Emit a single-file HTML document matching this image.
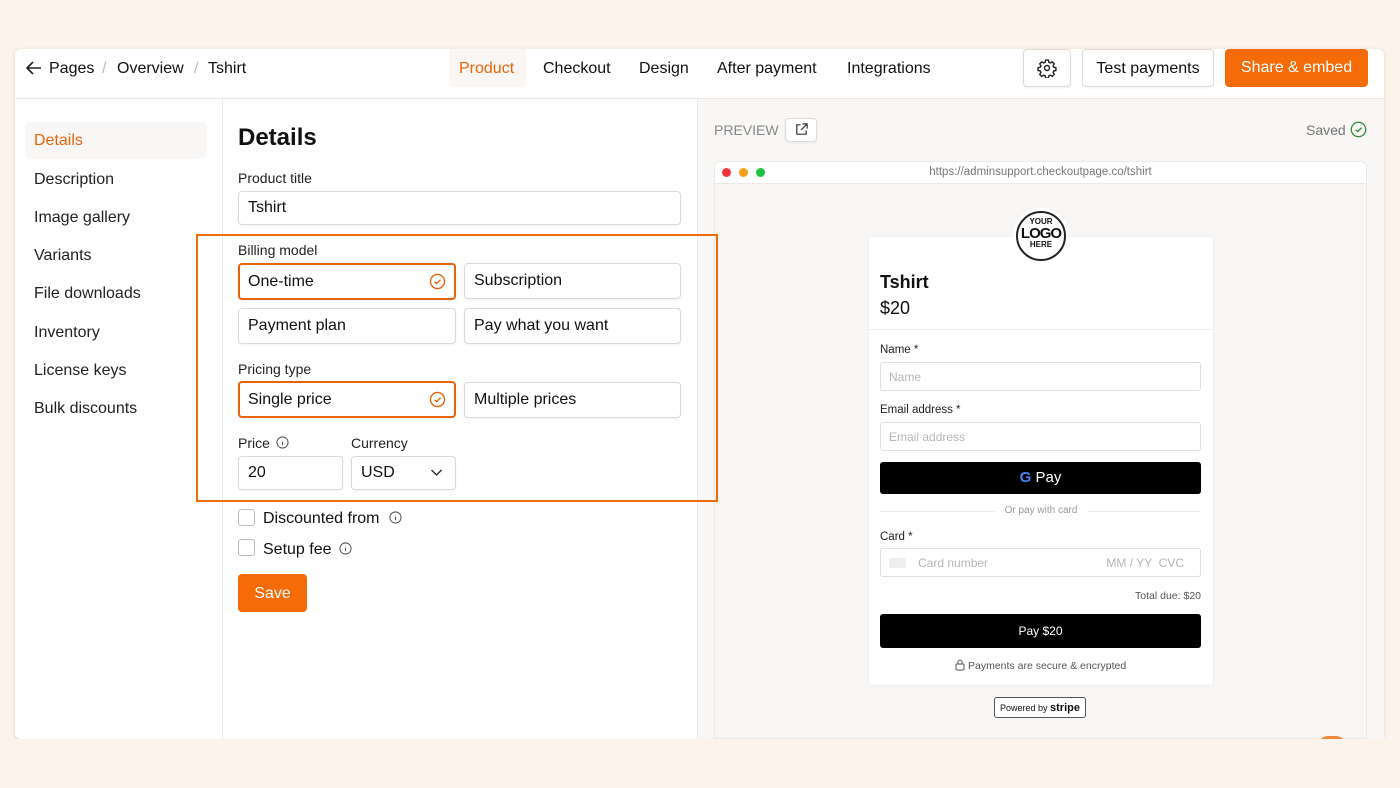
<!DOCTYPE html>
<html><head><meta charset="utf-8"><style>
*{box-sizing:border-box;margin:0;padding:0}
body{width:1400px;height:788px;background:#fcf3ea;font-family:"Liberation Sans",Arial,sans-serif;color:#111;position:relative;overflow:hidden}
.a{position:absolute}
.card{left:15px;top:49px;width:1369px;height:690px;background:#fff;border-radius:6px;box-shadow:0 1px 4px rgba(0,0,0,.12);overflow:hidden}
.t16{font-size:16px;line-height:20px}
.btn{border:1px solid #dedbd8;border-radius:4px;background:#fff;box-shadow:0 1px 2px rgba(0,0,0,.06)}
.inp{border:1px solid #dcdad7;border-radius:4px;background:#fff;box-shadow:0 1px 2px rgba(0,0,0,.06);font-size:16px;padding-left:9px;display:flex;align-items:center}
.sel{border:2px solid #e8640c;padding-left:8px}
.lbl{font-size:14px;color:#222}
.side{left:34px;font-size:16px;color:#222}
.ci{width:17px;height:17px;border:1px solid #bbb;border-radius:3px}
.pin{border:1px solid #e2e0de;border-radius:3px;background:#fff;font-size:12px;color:#b9b5b2;padding-left:8px;display:flex;align-items:center}
.pl{font-size:11.5px;color:#222}
</style></head><body>
<div class="a card"></div>
<!-- header -->
<div class="a" style="left:15px;top:98px;width:1369px;height:1px;background:#ebe8e5"></div>
<svg class="a" style="left:25px;top:60px" width="18" height="16" viewBox="0 0 18 16"><path d="M16 8H2M8 2L2 8l6 6" fill="none" stroke="#222" stroke-width="1.6"/></svg>
<div class="a t16" style="left:49px;top:59px">Pages</div>
<div class="a t16" style="left:102px;top:59px;color:#bbb">/</div>
<div class="a t16" style="left:117px;top:59px">Overview</div>
<div class="a t16" style="left:194px;top:59px;color:#bbb">/</div>
<div class="a t16" style="left:208px;top:59px">Tshirt</div>
<div class="a" style="left:449px;top:49px;width:77px;height:38px;background:#f9f6f3;border-radius:0 0 4px 4px"></div>
<div class="a t16" style="left:459px;top:59px;color:#e8640c">Product</div>
<div class="a t16" style="left:543px;top:59px">Checkout</div>
<div class="a t16" style="left:639px;top:59px">Design</div>
<div class="a t16" style="left:717px;top:59px">After payment</div>
<div class="a t16" style="left:847px;top:59px">Integrations</div>
<div class="a btn" style="left:1023px;top:49px;width:48px;height:38px"></div>
<svg class="a" style="left:1037px;top:58px" width="20" height="20" viewBox="0 0 24 24" fill="none" stroke="#222" stroke-width="1.7"><circle cx="12" cy="12" r="3"/><path d="M10.3 2.5h3.4l.5 2.6 1.8.9 2.3-1.4 2.4 2.4-1.4 2.3.8 1.8 2.6.5v3.4l-2.6.5-.8 1.8 1.4 2.3-2.4 2.4-2.3-1.4-1.8.8-.5 2.6h-3.4l-.5-2.6-1.8-.8-2.3 1.4-2.4-2.4 1.4-2.3-.8-1.8-2.6-.5v-3.4l2.6-.5.8-1.8-1.4-2.3 2.4-2.4 2.3 1.4 1.8-.9z"/></svg>
<div class="a btn t16" style="left:1082px;top:49px;width:132px;height:38px;text-align:center;padding-top:9px">Test payments</div>
<div class="a t16" style="left:1225px;top:49px;width:143px;height:38px;background:#f46b08;color:#fff;border-radius:4px;text-align:center;padding-top:9px">Share &amp; embed</div>
<!-- sidebar -->
<div class="a" style="left:222px;top:99px;width:1px;height:640px;background:#ebe8e5"></div>
<div class="a" style="left:25px;top:122px;width:182px;height:37px;background:#f9f7f5;border-radius:5px"></div>
<div class="a side" style="top:132px;color:#e8640c">Details</div>
<div class="a side" style="top:171px">Description</div>
<div class="a side" style="top:209px">Image gallery</div>
<div class="a side" style="top:247px">Variants</div>
<div class="a side" style="top:285px">File downloads</div>
<div class="a side" style="top:324px">Inventory</div>
<div class="a side" style="top:362px">License keys</div>
<div class="a side" style="top:400px">Bulk discounts</div>
<!-- preview bg -->
<div class="a" style="left:697px;top:99px;width:687px;height:640px;background:#f8f7f5;border-left:1px solid #ebe8e5"></div>
<!-- middle -->
<div class="a" style="left:238px;top:124px;font-size:24px;font-weight:bold">Details</div>
<div class="a lbl" style="left:238px;top:170px">Product title</div>
<div class="a inp" style="left:238px;top:191px;width:443px;height:34px">Tshirt</div>
<div class="a lbl" style="left:238px;top:242px">Billing model</div>
<div class="a inp sel" style="left:238px;top:263px;width:218px;height:37px">One-time</div>
<div class="a inp" style="left:464px;top:263px;width:217px;height:36px">Subscription</div>
<div class="a inp" style="left:238px;top:308px;width:218px;height:36px">Payment plan</div>
<div class="a inp" style="left:464px;top:308px;width:217px;height:36px">Pay what you want</div>
<div class="a lbl" style="left:238px;top:361px">Pricing type</div>
<div class="a inp sel" style="left:238px;top:381px;width:218px;height:37px">Single price</div>
<div class="a inp" style="left:464px;top:382px;width:217px;height:36px">Multiple prices</div>
<svg class="a" style="left:429px;top:273px" width="17" height="17" viewBox="0 0 16 16" fill="none" stroke="#e8640c" stroke-width="1.3"><circle cx="8" cy="8" r="6.6"/><path d="M5.2 8.2l2 1.9 3.6-3.8"/></svg>
<svg class="a" style="left:429px;top:391px" width="17" height="17" viewBox="0 0 16 16" fill="none" stroke="#e8640c" stroke-width="1.3"><circle cx="8" cy="8" r="6.6"/><path d="M5.2 8.2l2 1.9 3.6-3.8"/></svg>
<div class="a lbl" style="left:238px;top:435px">Price</div>
<svg class="a" style="left:276px;top:436px" width="13" height="13" viewBox="0 0 14 14" fill="none" stroke="#555" stroke-width="1.1"><circle cx="7" cy="7" r="6"/><path d="M7 6v4M7 4v.5"/></svg>
<div class="a lbl" style="left:351px;top:435px">Currency</div>
<div class="a inp" style="left:238px;top:456px;width:105px;height:34px">20</div>
<div class="a inp" style="left:351px;top:456px;width:105px;height:34px">USD</div>
<svg class="a" style="left:430px;top:468px" width="13" height="9" viewBox="0 0 13 9"><path d="M1.5 2l5 5 5-5" fill="none" stroke="#333" stroke-width="1.5"/></svg>
<div class="a ci" style="left:238px;top:509px"></div>
<div class="a t16" style="left:263px;top:509px">Discounted from</div>
<svg class="a" style="left:389px;top:511px" width="13" height="13" viewBox="0 0 14 14" fill="none" stroke="#555" stroke-width="1.1"><circle cx="7" cy="7" r="6"/><path d="M7 6v4M7 4v.5"/></svg>
<div class="a ci" style="left:238px;top:539px"></div>
<div class="a t16" style="left:263px;top:540px">Setup fee</div>
<svg class="a" style="left:339px;top:542px" width="13" height="13" viewBox="0 0 14 14" fill="none" stroke="#555" stroke-width="1.1"><circle cx="7" cy="7" r="6"/><path d="M7 6v4M7 4v.5"/></svg>
<div class="a t16" style="left:238px;top:574px;width:69px;height:38px;background:#f46b08;color:#fff;border-radius:4px;text-align:center;padding-top:10px">Save</div>
<!-- preview -->
<div class="a" style="left:714px;top:122px;font-size:14px;color:#888">PREVIEW</div>
<div class="a btn" style="left:785px;top:118px;width:32px;height:24px"></div>
<svg class="a" style="left:794px;top:122px" width="15" height="15" viewBox="0 0 16 16" fill="none" stroke="#333" stroke-width="1.3"><path d="M7 3H3v10h10V9M9 2h5v5M14 2L7.5 8.5"/></svg>
<div class="a" style="left:1306px;top:122px;font-size:14px;color:#777">Saved</div>
<svg class="a" style="left:1350px;top:121px" width="17" height="17" viewBox="0 0 16 16" fill="none" stroke="#2e8b3a" stroke-width="1.2"><circle cx="8" cy="8" r="6.8"/><path d="M5.3 8.2l2 1.9 3.5-3.8"/></svg>
<div class="a" style="left:714px;top:161px;width:653px;height:578px;background:#f7f6f4;border:1px solid #eceae7;border-radius:6px 6px 0 0"></div>
<div class="a" style="left:715px;top:162px;width:651px;height:22px;background:#fff;border-bottom:1px solid #eceae7;border-radius:6px 6px 0 0"></div>
<div class="a" style="left:722px;top:168px;width:9px;height:9px;border-radius:50%;background:#f4343c"></div>
<div class="a" style="left:739px;top:168px;width:9px;height:9px;border-radius:50%;background:#f6a019"></div>
<div class="a" style="left:756px;top:168px;width:9px;height:9px;border-radius:50%;background:#1dc340"></div>
<div class="a" style="left:714px;top:166px;width:653px;text-align:center;font-size:11.5px;color:#777">https://adminsupport.checkoutpage.co/tshirt</div>
<div class="a" style="left:869px;top:237px;width:344px;height:448px;background:#fff;border-radius:3px;box-shadow:0 0 2px rgba(0,0,0,.08)"></div>
<div class="a" style="left:869px;top:329px;width:344px;height:1px;background:#eeecea"></div>
<div class="a" style="left:1013px;top:208px;width:56px;height:56px;border-radius:50%;background:#fff"></div>
<div class="a" style="left:1016px;top:211px;width:50px;height:50px;border-radius:50%;border:2px solid #222;text-align:center;font-weight:bold;color:#111;line-height:1">
<div style="font-size:8px;margin-top:5px">YOUR</div><div style="font-size:15px;letter-spacing:-1px">LOGO</div><div style="font-size:8px">HERE</div></div>
<div class="a" style="left:880px;top:272px;font-size:18px;font-weight:bold">Tshirt</div>
<div class="a" style="left:880px;top:298px;font-size:18px">$20</div>
<div class="a pl" style="left:880px;top:344px">Name *</div>
<div class="a pin" style="left:880px;top:362px;width:321px;height:29px">Name</div>
<div class="a pl" style="left:880px;top:404px">Email address *</div>
<div class="a pin" style="left:880px;top:422px;width:321px;height:29px">Email address</div>
<div class="a" style="left:880px;top:462px;width:321px;height:32px;background:#000;border-radius:3px;color:#fff;font-size:15px;text-align:center;padding-top:7px"><span style="font-weight:bold;color:#4285f4">G</span> Pay</div>
<div class="a" style="left:880px;top:511px;width:321px;height:1px;background:#eeecea"></div>
<div class="a" style="left:995px;top:505px;width:92px;background:#fff;text-align:center;font-size:10px;color:#999">Or pay with card</div>
<div class="a pl" style="left:880px;top:531px">Card *</div>
<div class="a pin" style="left:880px;top:548px;width:321px;height:29px"><span style="display:inline-block;width:17px;height:10px;background:#eee;margin-right:12px"></span>Card number<span style="margin-left:auto;margin-right:16px">MM / YY &nbsp;CVC</span></div>
<div class="a" style="left:1100px;top:590px;width:101px;text-align:right;font-size:10.5px;color:#555">Total due: $20</div>
<div class="a" style="left:880px;top:614px;width:321px;height:34px;background:#000;border-radius:3px;color:#fff;font-size:12px;text-align:center;padding-top:10px">Pay $20</div>
<svg class="a" style="left:955px;top:659px" width="10" height="12" viewBox="0 0 10 12" fill="none" stroke="#555" stroke-width="1"><rect x="1" y="5" width="8" height="6" rx="1"/><path d="M2.8 5V3.3a2.2 2.2 0 0 1 4.4 0V5"/></svg>
<div class="a" style="left:968px;top:660px;font-size:10.5px;color:#555">Payments are secure &amp; encrypted</div>
<div class="a" style="left:994px;top:697px;width:92px;height:21px;border:1px solid #555;border-radius:3px;background:#fff;font-size:9px;text-align:center;padding-top:4px">Powered by <b style="font-size:11px">stripe</b></div>
<div class="a" style="left:1318px;top:736px;width:28px;height:10px;border-radius:14px 14px 0 0;background:#f08a3a"></div>
<!-- highlight box on top -->
<div class="a" style="left:196px;top:234px;width:522px;height:268px;border:2px solid #f26b0a"></div>
<div class="a" style="left:0;top:739px;width:1400px;height:49px;background:#fcf3ea"></div>
</body></html>
